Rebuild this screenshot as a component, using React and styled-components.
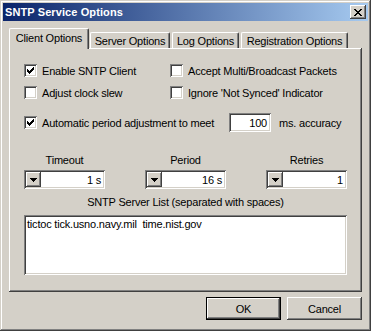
import React from 'react'
import styled, { createGlobalStyle } from 'styled-components';

const Global = createGlobalStyle`
body{
    margin: 0;
    background: #d4d0c8;
    font-family: "Liberation Sans", Arial, sans-serif;
    font-size: 11px;
    letter-spacing: -0.2px;
    color: #000;
}
`

const raised = `
    box-shadow: inset -1px -1px #404040, inset 1px 1px #fff, inset -2px -2px #808080, inset 2px 2px #d4d0c8;
`
const sunken = `
    box-shadow: inset 1px 1px #808080, inset -1px -1px #fff, inset 2px 2px #404040, inset -2px -2px #d4d0c8;
`

const CheckMark = () => (
    <svg width="7" height="7" viewBox="0 0 7 7" shapeRendering="crispEdges">
        <path d="M6 0h1v3h-1v1h-1v1h-1v1h-1v1h-1v-1h-1v-1h-1v-3h1v1h1v1h1v-1h1v-1h1z" fill="#000" />
    </svg>
)

const CloseGlyph = () => (
    <svg width="8" height="7" viewBox="0 0 8 7" shapeRendering="crispEdges">
        <path d="M0 0h2v1h1v1h2v-1h1v-1h2v1h-1v1h-1v1h-1v1h1v1h1v1h1v1h-2v-1h-1v-1h-2v1h-1v1h-2v-1h1v-1h1v-1h1v-1h-1v-1h-1v-1h-1z" fill="#000" />
    </svg>
)

const DownArrow = () => (
    <svg width="7" height="4" viewBox="0 0 7 4" shapeRendering="crispEdges">
        <path d="M0 0h7v1h-1v1h-1v1h-1v1h-1v-1h-1v-1h-1v-1h-1z" fill="#000" />
    </svg>
)

const CheckBox = ({ checked, label }) => (
    <CheckLabel>
        <Box>{checked && <CheckMark />}</Box>
        {label}
    </CheckLabel>
)

const Spinner = ({ label, value }) => (
    <SpinGroup>
        <SpinCaption>{label}</SpinCaption>
        <SpinField>
            <SpinButton><DownArrow /></SpinButton>
            <SpinValue>{value}</SpinValue>
        </SpinField>
    </SpinGroup>
)

const tabs = [
    { name: 'Client Options', w: 80 },
    { name: 'Server Options', w: 80 },
    { name: 'Log Options', w: 67 },
    { name: 'Registration Options', w: 107 },
];

const App = () => {
  return (
    <>
    <Global />
    <Window>
        <TitleBar>
            <Title>SNTP Service Options</Title>
            <CloseButton><CloseGlyph /></CloseButton>
        </TitleBar>
        <Body>
            <TabRow>
                {tabs.map((t, i) => (
                    <Tab key={t.name} $active={i === 0} $w={t.w}>{t.name}</Tab>
                ))}
            </TabRow>
            <Panel>
                <CheckGrid>
                    <CheckBox checked label="Enable SNTP Client" />
                    <CheckBox label="Accept Multi/Broadcast Packets" />
                    <CheckBox label="Adjust clock slew" />
                    <CheckBox label="Ignore 'Not Synced' Indicator" />
                </CheckGrid>
                <AutoRow>
                    <CheckBox checked label="Automatic period adjustment to meet" />
                    <NumberField>100</NumberField>
                    <span>ms. accuracy</span>
                </AutoRow>
                <SpinRow>
                    <Spinner label="Timeout" value="1 s" />
                    <Spinner label="Period" value="16 s" />
                    <Spinner label="Retries" value="1" />
                </SpinRow>
                <ListCaption>SNTP Server List (separated with spaces)</ListCaption>
                <ListField>tictoc tick.usno.navy.mil  time.nist.gov</ListField>
            </Panel>
            <Footer>
                <PushButton $default>OK</PushButton>
                <PushButton>Cancel</PushButton>
            </Footer>
        </Body>
    </Window>
    </>
  )
}

export default App;

const Window = styled.div`
width: 371px;
height: 331px;
box-sizing: border-box;
padding: 3px;
background: #d4d0c8;
box-shadow: inset -1px -1px #404040, inset 1px 1px #d4d0c8, inset -2px -2px #808080, inset 2px 2px #fff;
`

const TitleBar = styled.div`
height: 18px;
display: flex;
align-items: center;
justify-content: space-between;
padding: 0 2px 0 2px;
background: linear-gradient(to right, #0a246a, #a6caf0);
`

const Title = styled.div`
color: #fff;
font-weight: 700;
font-size: 11px;
letter-spacing: 0.1px;
`

const CloseButton = styled.div`
width: 16px;
height: 14px;
display: grid;
place-items: center;
background: #d4d0c8;
${raised}
`

const Body = styled.div`
padding: 7px 6px 0 6px;
`

const TabRow = styled.div`
display: flex;
align-items: flex-end;
height: 20px;
`

const Tab = styled.div`
position: relative;
z-index: ${(props) => (props.$active ? 1 : 0)};
width: ${(props) => props.$w}px;
height: ${(props) => (props.$active ? 21 : 16)}px;
margin-bottom: ${(props) => (props.$active ? -1 : 0)}px;
margin-right: ${(props) => (props.$active ? 1 : 2)}px;
box-sizing: border-box;
display: flex;
align-items: center;
justify-content: center;
padding-bottom: ${(props) => (props.$active ? 2 : 0)}px;
background: #d4d0c8;
border-top: 1px solid #fff;
border-left: 1px solid #fff;
border-right: 1px solid #404040;
border-radius: 2px 2px 0 0;
box-shadow: inset -1px 0 #808080;
white-space: nowrap;
`

const Panel = styled.div`
height: 244px;
box-sizing: border-box;
padding: 16px 15px 0 15px;
display: flex;
flex-direction: column;
box-shadow: inset -1px -1px #404040, inset 1px 1px #fff, inset -2px -2px #808080;
`

const CheckGrid = styled.div`
display: grid;
grid-template-columns: 146px 1fr;
row-gap: 9px;
`

const CheckLabel = styled.label`
display: flex;
align-items: center;
gap: 5px;
height: 13px;
white-space: nowrap;
`

const Box = styled.span`
width: 13px;
height: 13px;
flex: none;
box-sizing: border-box;
display: grid;
place-items: center;
background: #fff;
${sunken}
`

const AutoRow = styled.div`
display: flex;
align-items: center;
margin-top: 14px;
height: 19px;

& > label { width: 205px; }
& > span { margin-left: 8px; }
`

const NumberField = styled.div`
width: 42px;
height: 19px;
box-sizing: border-box;
padding: 0 4px;
display: flex;
align-items: center;
justify-content: flex-end;
background: #fff;
${sunken}
`

const SpinRow = styled.div`
display: grid;
grid-template-columns: repeat(3, 81px);
justify-content: space-between;
margin-top: 22px;
`

const SpinGroup = styled.div`
display: flex;
flex-direction: column;
gap: 3px;
`

const SpinCaption = styled.div`
height: 13px;
line-height: 13px;
text-align: center;
`

const SpinField = styled.div`
height: 19px;
box-sizing: border-box;
padding: 2px;
display: flex;
align-items: stretch;
background: #fff;
${sunken}
`

const SpinButton = styled.div`
width: 15px;
display: grid;
place-items: center;
background: #d4d0c8;
${raised}
`

const SpinValue = styled.div`
flex: 1;
display: flex;
align-items: center;
justify-content: flex-end;
padding-right: 2px;
`

const ListCaption = styled.div`
margin-top: 7px;
height: 13px;
line-height: 13px;
text-align: center;
`

const ListField = styled.div`
margin-top: 6px;
height: 60px;
box-sizing: border-box;
padding: 3px 3px;
background: #fff;
white-space: pre;
${sunken}
`

const Footer = styled.div`
display: flex;
justify-content: flex-end;
gap: 6px;
margin-top: 5px;
`

const PushButton = styled.div`
width: 75px;
height: 23px;
box-sizing: border-box;
display: grid;
place-items: center;
background: #d4d0c8;
${(props) => (props.$default
    ? 'box-shadow: inset 0 0 0 1px #000, inset -2px -2px #404040, inset 2px 2px #fff, inset -3px -3px #808080;'
    : raised)}
`
